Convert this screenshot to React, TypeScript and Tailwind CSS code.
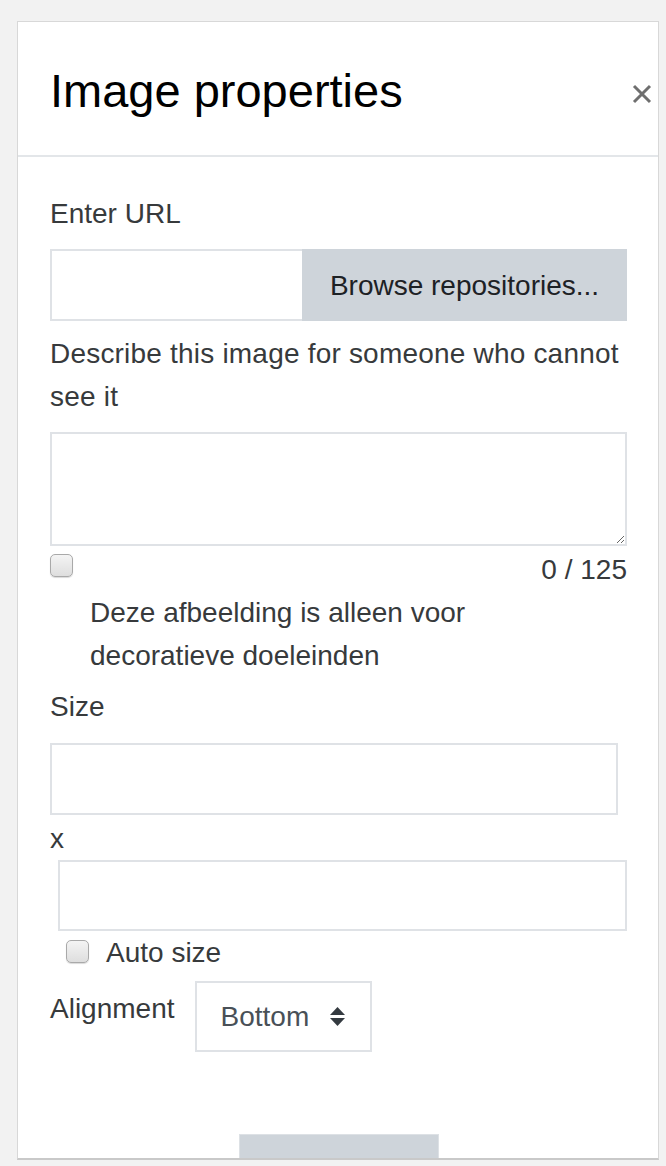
import React from "react"

const font = { fontFamily: '"Liberation Sans", Arial, sans-serif' }

function Checkbox() {
  return (
    <span className="block w-[23px] h-[23px] rounded-[5px] border border-[#a9a9a9] bg-gradient-to-b from-[#f4f4f4] to-[#dedede] shadow-[0_1px_1px_rgba(0,0,0,0.15)]" />
  )
}

export default function App() {
  return (
    <div className="h-[1166px] overflow-hidden bg-[#f2f2f2] pt-[21px]" style={font}>
      <div className="ml-[17px] w-[642px] h-[1139px] overflow-hidden bg-white border border-[#d8d8d8] border-b-2 border-b-[#c9c9c9]">
        {/* Header */}
        <div className="h-[135px] flex items-start justify-between pl-[32px] pr-[6px] pt-[45px] border-b-2 border-[#e3e6e9]">
          <h5 className="text-[47px] leading-[47px] text-black">Image properties</h5>
          <button className="mt-[17px] w-[20px] h-[20px]">
            <svg viewBox="0 0 20 20" className="w-[20px] h-[20px]">
              <path d="M2 2 L18 18 M18 2 L2 18" stroke="#6f6f6f" strokeWidth="3" strokeLinecap="butt" />
            </svg>
          </button>
        </div>

        {/* Body */}
        <div className="pl-[32px] pr-[31px] pt-[35px] text-[28px] leading-[43px] text-[#373a3c]">
          <div>Enter URL</div>
          <div className="mt-[14px] flex h-[72px]">
            <input className="w-[252px] h-full border-2 border-r-0 border-[#dfe2e6] outline-none" />
            <button className="flex-1 h-full bg-[#ced4da] text-[#1d2125]">Browse repositories...</button>
          </div>

          <div className="mt-[11px] tracking-[0.2px]">Describe this image for someone who cannot see it</div>
          <textarea className="mt-[14px] block w-full h-[114px] border-2 border-[#dfe2e6] outline-none" />

          <div className="mt-[2px] flex items-start justify-between">
            <div className="mt-[6px]">
              <Checkbox />
            </div>
            <span className="text-[#373a3c]">0 / 125</span>
          </div>
          <div className="pl-[40px]">
            Deze afbeelding is alleen voor
            <br />
            decoratieve doeleinden
          </div>

          <div className="mt-[8px]">Size</div>
          <input className="mt-[15px] block w-[568px] h-[72px] border-2 border-[#dfe2e6] outline-none" />
          <div className="mt-[2px]">x</div>
          <input className="ml-[8px] block w-[569px] h-[71px] border-2 border-[#dfe2e6] outline-none" />

          <div className="flex items-start pl-[16px]">
            <div className="mt-[9px]">
              <Checkbox />
            </div>
            <span className="ml-[17px]">Auto size</span>
          </div>

          <div className="mt-[7px] flex items-start">
            <span className="mt-[6px]">Alignment</span>
            <div className="ml-[20px] w-[177px] h-[71px] border-2 border-[#dfe2e6] flex items-center justify-between pl-[24px] pr-[25px] text-[#495057]">
              <span>Bottom</span>
              <svg viewBox="0 0 15 19" className="w-[15px] h-[19px]">
                <path d="M7.5 0 L15 8 L0 8 Z M0 11 L15 11 L7.5 19 Z" fill="#343a40" />
              </svg>
            </div>
          </div>

          <div className="mt-[82px] flex justify-center">
            <button className="w-[200px] h-[60px] bg-[#ced4da] border border-[#dde1e5]" />
          </div>
        </div>
      </div>
    </div>
  )
}
